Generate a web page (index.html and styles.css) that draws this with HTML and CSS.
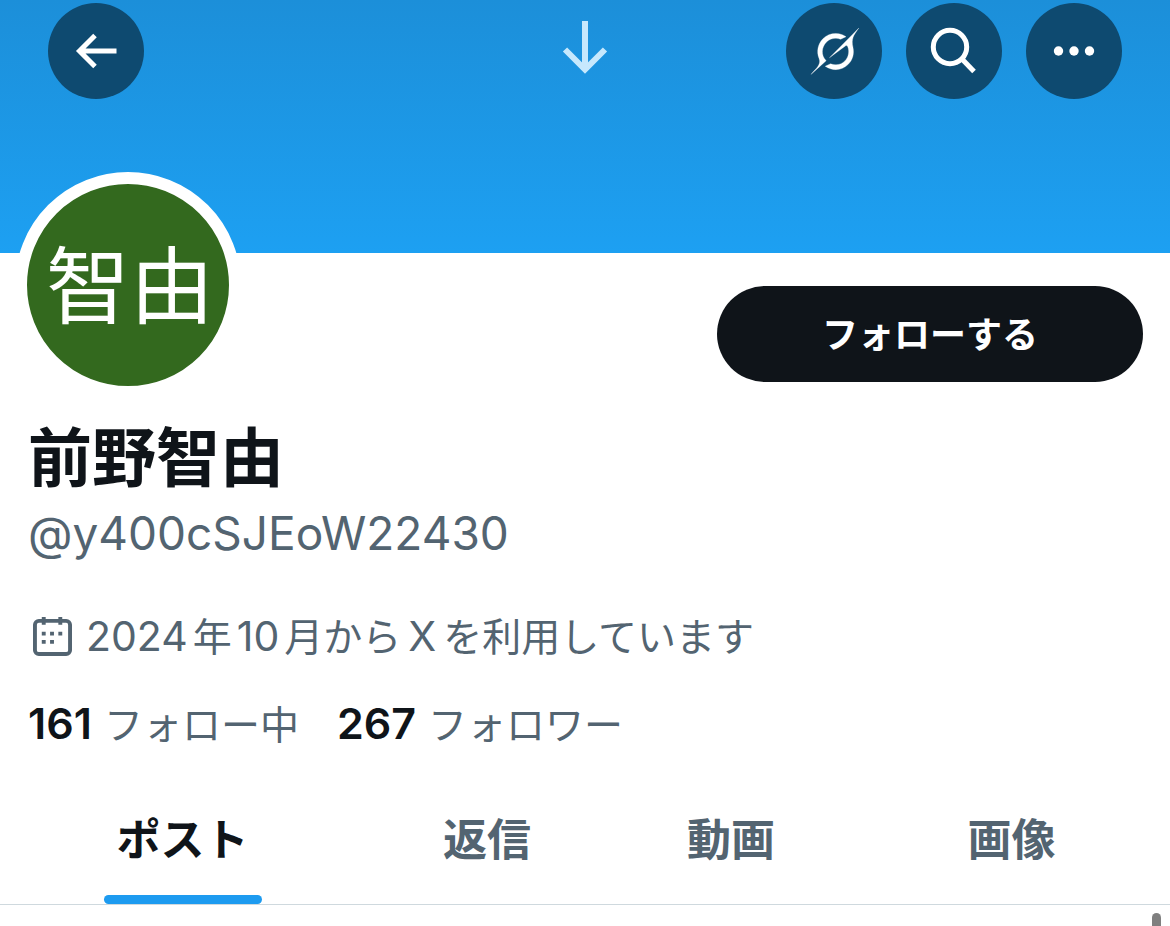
FILE: index.html
```html
<!DOCTYPE html>
<html lang="ja">
<head>
<meta charset="utf-8">
<meta name="viewport" content="width=device-width, initial-scale=1">
<title>前野智由</title>
<link rel="stylesheet" href="styles.css">
</head>
<body>
<header class="banner">
  <nav class="toolbar" aria-label="操作">
    <button class="round" type="button" aria-label="戻る">
      <svg width="96" height="96" viewBox="0 0 96 96" fill="none" stroke="currentColor" stroke-width="5"><path d="M68.500 48H33M47 32.500L31.500 48L47 63.500"/></svg>
    </button>
    <svg class="pull" width="48" height="96" viewBox="0 0 48 96" fill="none" stroke="currentColor" stroke-width="6" aria-hidden="true"><path d="M24 18V66M4 46.500L24 66.500L44 46.500"/></svg>
    <div class="actions">
      <button class="round" type="button" aria-label="Grok">
        <svg width="96" height="96" viewBox="0 0 96 96" fill="currentColor"><path stroke="currentColor" stroke-width=".2" transform="translate(25 25) scale(1.45)" d="M12.745 20.54l10.97-8.19c.539-.4 1.307-.244 1.564.38 1.349 3.288.746 7.241-1.938 9.955-2.683 2.714-6.417 3.31-9.83 1.954l-3.728 1.745c5.347 3.697 11.84 2.782 15.898-1.324 3.219-3.255 4.216-7.692 3.284-11.693l.008.009c-1.351-5.878.332-8.227 3.782-13.031L33 0l-4.54 4.59v-.014L12.743 20.544m-2.263 1.987c-3.837-3.707-3.175-9.446.1-12.755 2.42-2.449 6.388-3.448 9.852-1.979l3.72-1.737c-.67-.49-1.53-1.017-2.515-1.387-4.455-1.854-9.789-.931-13.41 2.728-3.483 3.523-4.579 8.94-2.697 13.561 1.405 3.454-.899 5.898-3.22 8.364C1.49 30.2.666 31.074 0 32l10.478-9.466"/></svg>
      </button>
      <button class="round" type="button" aria-label="検索">
        <svg width="96" height="96" viewBox="0 0 96 96" fill="none" stroke="currentColor" stroke-width="5"><circle cx="44" cy="44" r="16.700"/><path d="M55.500 55.500L68 68.500"/></svg>
      </button>
      <button class="round" type="button" aria-label="もっと見る">
        <svg width="96" height="96" viewBox="0 0 96 96" fill="currentColor"><circle cx="32.500" cy="48" r="4.700"/><circle cx="48" cy="48" r="4.700"/><circle cx="63.500" cy="48" r="4.700"/></svg>
      </button>
    </div>
  </nav>
</header>
<main>
  <section class="profile">
    <div class="top">
      <div class="avatar">智由</div>
      <button class="follow" type="button">フォローする</button>
    </div>
    <h1 class="name">前野智由</h1>
    <p class="handle">@y400cSJEoW22430</p>
    <p class="joined">
      <svg width="40" height="40" viewBox="0 0 40 40" aria-hidden="true"><rect x="2" y="4" width="36" height="34" rx="4" fill="none" stroke="currentColor" stroke-width="4"/><path fill="currentColor" d="M9 0h4v8H9zM26 0h4v8h-4zM9 15h4v4H9zM17.500 15h4v4h-4zM26 15h4v4h-4zM9 23.500h4v4H9zM17.500 23.500h4v4h-4z"/></svg>
      <span><span class="latin first">2024</span>年<span class="latin">10</span>月から<span class="latin letter">X</span>を利用しています</span>
    </p>
    <div class="stats">
      <a href="#following"><strong>161</strong>フォロー中</a>
      <a href="#followers"><strong>267</strong>フォロワー</a>
    </div>
  </section>
  <nav class="tabs" aria-label="プロフィール">
    <a class="tab active" href="#posts" aria-current="page"><span>ポスト</span></a>
    <a class="tab" href="#replies"><span>返信</span></a>
    <a class="tab" href="#videos"><span>動画</span></a>
    <a class="tab" href="#photos"><span>画像</span></a>
  </nav>
</main>
<div class="scroll-thumb"></div>
</body>
</html>
```
FILE: styles.css
```css
* {
  box-sizing: border-box;
}

body {
  margin: 0;
  min-height: 100vh;
  position: relative;
  overflow: hidden;
  background: #fff;
  color: #0f1419;
  font-family: Inter, "Noto Sans CJK JP", sans-serif;
}

button {
  border: 0;
  padding: 0;
  font: inherit;
  cursor: pointer;
}

a {
  color: inherit;
  text-decoration: none;
}

h1,
p {
  margin: 0;
}

svg {
  display: block;
  flex: none;
}

.banner {
  height: 253px;
  padding: 3px 48px 0;
  background: linear-gradient(#1c8fd9, #1da0f2);
}

.toolbar {
  display: grid;
  grid-template-columns: 1fr auto 1fr;
}

.actions {
  display: flex;
  gap: 24px;
  justify-self: end;
}

.round {
  width: 96px;
  height: 96px;
  border-radius: 50%;
  background: #0e4a70;
  color: #fff;
}

.pull {
  color: #c6e8fd;
}

.profile {
  padding: 0 27px 0 28px;
}

.top {
  display: flex;
  justify-content: space-between;
  align-items: flex-start;
}

.avatar {
  display: flex;
  justify-content: center;
  width: 226px;
  height: 226px;
  margin: -81px 0 0 -13px;
  padding: 2px 0 0 4px;
  border: 12px solid #fff;
  border-radius: 50%;
  background: #33691e;
  color: #fff;
  font-size: 84px;
  line-height: 202px;
  white-space: nowrap;
}

.follow {
  width: 426px;
  height: 96px;
  margin-top: 33px;
  padding-bottom: 4px;
  border-radius: 48px;
  background: #0f1419;
  color: #fff;
  font-size: 36px;
  font-weight: 700;
}

.name {
  margin-top: 20px;
  font-size: 64px;
  font-weight: 700;
  line-height: 80px;
}

.handle {
  margin-top: 7px;
  color: #536471;
  font-size: 46px;
  line-height: 56px;
}

.joined {
  display: flex;
  align-items: center;
  gap: 14px;
  margin-top: 47px;
  padding-left: 5px;
  color: #536471;
  font-size: 39px;
  line-height: 56px;
}

.joined svg {
  width: 39px;
  height: 39px;
}

.latin {
  margin: 0 5px;
  font-size: 41px;
}

.first {
  margin-left: 0;
}

.letter {
  margin: 0 7px;
}

.stats {
  display: flex;
  gap: 38px;
  margin-top: 30px;
  color: #536471;
  font-size: 39px;
  line-height: 56px;
}

.stats strong {
  margin-right: 12px;
  color: #0f1419;
  font-size: 43px;
  font-weight: 600;
}

.tabs {
  display: grid;
  grid-template-columns: 365fr 244fr 244fr 317fr;
  margin-top: 39px;
  border-bottom: 1px solid #cfd9de;
  color: #536471;
  font-size: 44px;
  font-weight: 700;
  line-height: 96px;
}

.tab {
  display: flex;
  justify-content: center;
}

.tab span {
  padding: 0 13px 16px;
}

.active {
  color: #0f1419;
}

.active span {
  display: flex;
  flex-direction: column;
  padding-bottom: 0;
}

.active span::after {
  content: "";
  height: 9px;
  margin: 7px -13px 0;
  border-radius: 5px;
  background: #1d9bf0;
}

.scroll-thumb {
  position: absolute;
  right: 9px;
  bottom: 0;
  width: 9px;
  height: 13px;
  border-radius: 5px 5px 0 0;
  background: #7f7f7f;
}
```
